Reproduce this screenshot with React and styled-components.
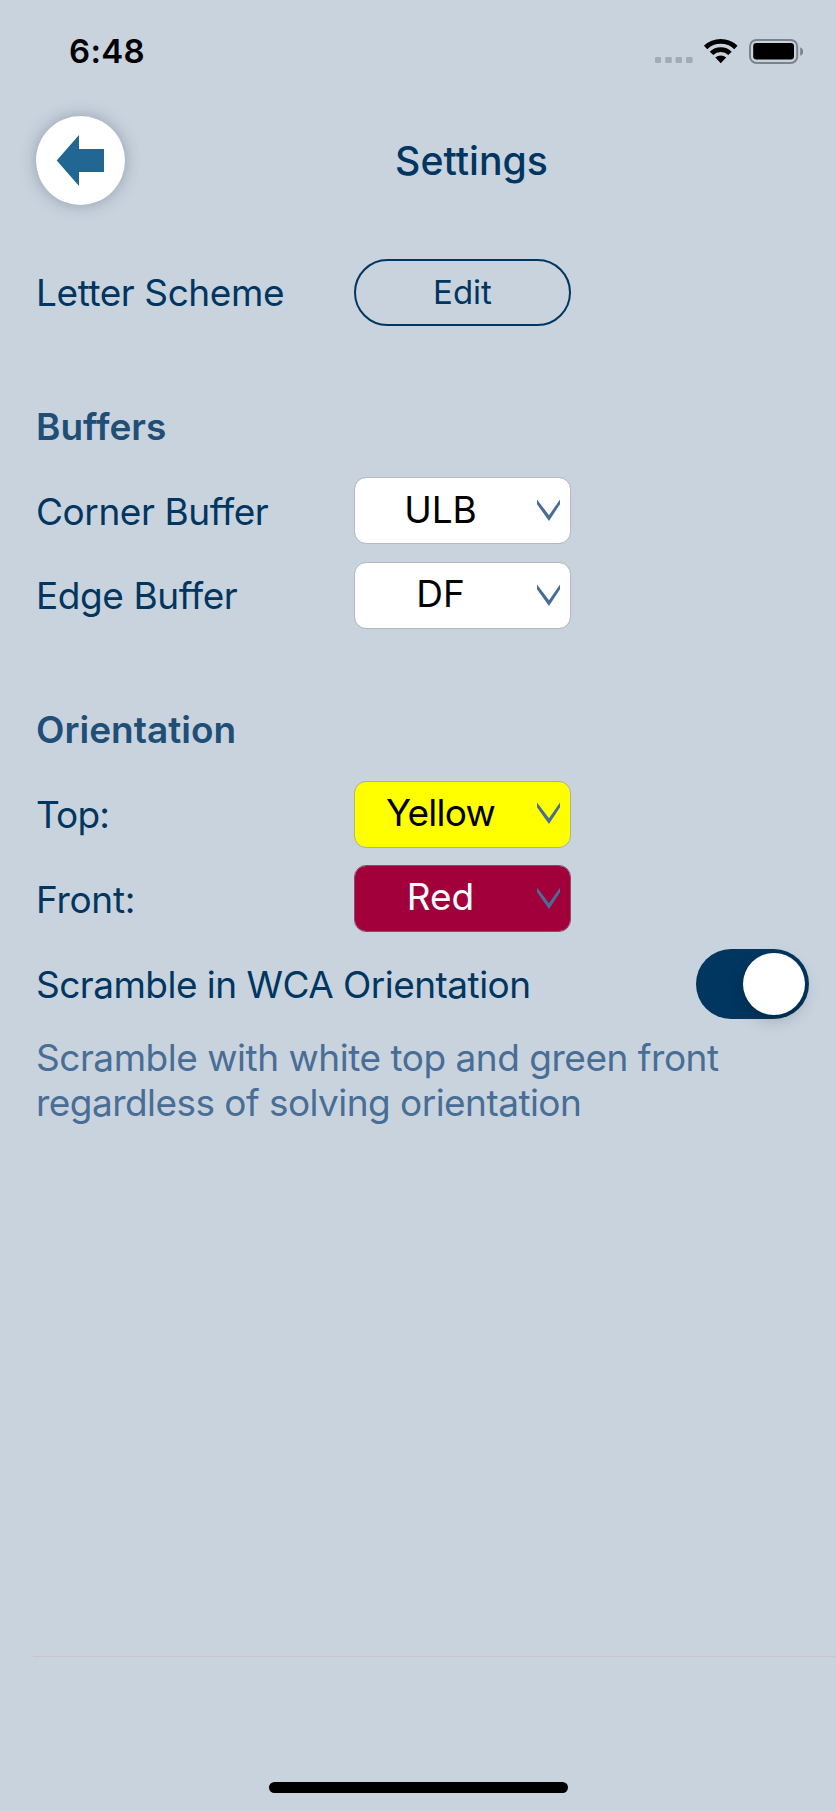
import React, { useState } from "react";
import styled, { createGlobalStyle } from "styled-components";

const GlobalStyle = createGlobalStyle`
  *, *::before, *::after { box-sizing: border-box; }
  html, body { margin: 0; padding: 0; background: #c9d3de; }
  button { font: inherit; color: inherit; padding: 0; margin: 0; }
`;

const Screen = styled.div`
  width: 836px;
  height: 1811px;
  display: flex;
  flex-direction: column;
  overflow: hidden;
  background: #c9d3de;
  color: #003660;
  font-family: Inter, "Liberation Sans", sans-serif;
  font-size: 37px;
  line-height: 44.6px;
`;

const StatusBar = styled.div`
  flex: none;
  height: 116px;
  padding: 31px 33px 0 69px;
  display: flex;
  align-items: flex-start;
  justify-content: space-between;
  color: #000;
`;

const Time = styled.span`
  font-size: 33px;
  line-height: 40px;
  font-weight: 600;
  letter-spacing: 0.3px;
`;

const StatusIcons = styled.svg`
  display: block;
  width: 148px;
  height: 40px;
`;

const Header = styled.header`
  flex: none;
  height: 89px;
  padding: 0 36px;
  display: grid;
  grid-template-columns: 89px 1fr;
  align-items: center;
`;

const BackButton = styled.button`
  width: 89px;
  height: 89px;
  border: 0;
  border-radius: 50%;
  background: #fff;
  box-shadow: 0 0 16px rgba(40, 55, 80, 0.34);
  display: block;

  svg { display: block; width: 89px; height: 89px; }
`;

const Title = styled.h1`
  margin: 0;
  padding-top: 2px;
  padding-left: 18px;
  text-align: center;
  font-size: 39.2px;
  font-weight: 500;
`;

const Content = styled.main`
  flex: 1;
  padding: 54px 27px 0 36px;
  display: flex;
  flex-direction: column;
  gap: 66.9px;
`;

const Section = styled.section`
  display: flex;
  flex-direction: column;
  gap: 17.8px;
`;

const SectionTitle = styled.h2`
  margin: 0;
  height: 66.9px;
  padding-top: 2px;
  display: flex;
  align-items: center;
  font-size: 37px;
  line-height: 44.6px;
  font-weight: 600;
  color: #1f4e76;
`;

const Row = styled.div`
  height: 66.9px;
  display: grid;
  grid-template-columns: ${(p) => (p.$wide ? "1fr 113px" : "318px 217px")};
  align-items: center;
`;

const Label = styled.span`
  padding-top: ${(p) => p.$drop ?? 2}px;
  white-space: nowrap;
  letter-spacing: ${(p) => p.$tracking || "-0.43px"};
`;

const EditButton = styled.button`
  height: 67px;
  padding-bottom: 2px;
  border: 2px solid #003660;
  border-radius: 34px;
  background: transparent;
  font-size: 33px;
  line-height: 40px;
`;

const Select = styled.button`
  height: 67px;
  padding: 0 10px 2px 0;
  border: 1px solid ${(p) => p.$edge};
  border-radius: 12px;
  background: ${(p) => p.$fill};
  background-clip: padding-box;
  color: ${(p) => p.$ink};
  display: grid;
  grid-template-columns: 1fr 23px;
  align-items: center;
`;

const SelectValue = styled.span`
  padding-left: 8px;
  padding-right: 19px;
  padding-bottom: ${(p) => p.$lift || 0}px;
  text-align: center;
  font-size: 37px;
  line-height: 44px;
  letter-spacing: ${(p) => p.$tracking || "0"};
`;

const Toggle = styled.button`
  width: 113px;
  height: 70px;
  margin-top: -1px;
  padding: 4px;
  border: 0;
  border-radius: 35px;
  background: #003660;
  display: flex;
  align-items: center;
  justify-content: ${(p) => (p.$on ? "flex-end" : "flex-start")};
`;

const Knob = styled.span`
  width: 62px;
  height: 62px;
  border-radius: 50%;
  background: #fff;
  box-shadow: 0 6px 16px rgba(0, 0, 0, 0.17), 0 3px 3px rgba(0, 0, 0, 0.06);
`;

const Hint = styled.p`
  margin: 0;
  color: #486e96;
  line-height: 45px;
  white-space: nowrap;
`;

const HintLine = styled.span`
  display: block;
  letter-spacing: ${(p) => p.$tracking || "0"};
`;

const Footer = styled.footer`
  flex: none;
  height: 155px;
  margin-left: 33px;
  padding: 0 0 18px 0;
  border-top: 1px solid #c5c6cc;
  display: flex;
  align-items: flex-end;
`;

const HomeIndicator = styled.div`
  width: 299px;
  height: 11px;
  margin-left: 236px;
  border-radius: 5.5px;
  background: #000;
`;

function Indicators() {
  return (
    <StatusIcons viewBox="655 31 148 40" aria-hidden="true">
      <g fill="#a1abb5">
        <rect x="655" y="57" width="6" height="6" rx="1.2" />
        <rect x="665.2" y="57" width="6.6" height="6" rx="1.2" />
        <rect x="675.5" y="57" width="6.5" height="6" rx="1.2" />
        <rect x="686" y="57" width="6.6" height="6" rx="1.2" />
      </g>
      <g fill="none" stroke="#000" strokeWidth="4.8">
        <path d="M705.6 47.4A22 22 0 0 1 735.9 47.4" />
        <path d="M711.5 53.4A13.2 13.2 0 0 1 730 53.4" />
      </g>
      <path d="M715.3 57.6A7.8 7.8 0 0 1 726.2 57.6L720.75 63.2Z" />
      <rect x="750" y="39.9" width="47.2" height="23" rx="6.5" fill="none" stroke="#7b838b" strokeWidth="2" />
      <rect x="753.2" y="43" width="40.8" height="16.6" rx="3.3" />
      <path d="M800.2 47.2A4.6 4.6 0 0 1 800.2 55.8Z" fill="#7b838b" />
    </StatusIcons>
  );
}

function Chevron() {
  return (
    <svg width="23" height="24" viewBox="0 0 23 24" aria-hidden="true">
      <path d="M0 1.5L12 17.2L23 1.5V6.2L12 23L0 6.2Z" fill="#486e96" />
    </svg>
  );
}

function SelectRow({
  label,
  value,
  fill = "#fff",
  edge = "#b2bac5",
  ink = "#000",
  lift,
  tracking,
  valueTracking,
}) {
  return (
    <Row>
      <Label $tracking={tracking}>{label}</Label>
      <Select $fill={fill} $edge={edge} $ink={ink}>
        <SelectValue $tracking={valueTracking} $lift={lift}>{value}</SelectValue>
        <Chevron />
      </Select>
    </Row>
  );
}

export default function App() {
  const [wca, setWca] = useState(true);

  return (
    <>
      <GlobalStyle />
      <Screen>
        <StatusBar>
          <Time>6:48</Time>
          <Indicators />
        </StatusBar>
        <Header>
          <BackButton aria-label="Back">
            <svg viewBox="0 0 89 89">
              <path d="M20.7 44.5L43 19V33H68V56H43V70Z" fill="#226794" />
            </svg>
          </BackButton>
          <Title>Settings</Title>
        </Header>
        <Content>
          <Row>
            <Label>Letter Scheme</Label>
            <EditButton>Edit</EditButton>
          </Row>
          <Section>
            <SectionTitle>Buffers</SectionTitle>
            <SelectRow label="Corner Buffer" value="ULB" />
            <SelectRow label="Edge Buffer" value="DF" lift={1} />
          </Section>
          <Section>
            <SectionTitle>Orientation</SectionTitle>
            <SelectRow
              label="Top:"
              value="Yellow"
              fill="#ffff00"
              edge="#b0b580"
              tracking="-0.9px"
              valueTracking="-0.8px"
            />
            <SelectRow
              label="Front:"
              value="Red"
              fill="#a2003b"
              edge="#8a4a68"
              ink="#fff"
              lift={1}
              tracking="-0.3px"
            />
            <Row $wide>
              <Label $tracking="-0.53px" $drop={1}>Scramble in WCA Orientation</Label>
              <Toggle
                $on={wca}
                role="switch"
                aria-checked={wca}
                aria-label="Scramble in WCA Orientation"
                onClick={() => setWca(!wca)}
              >
                <Knob />
              </Toggle>
            </Row>
            <Hint>
              <HintLine $tracking="-0.48px">Scramble with white top and green front</HintLine>
              <HintLine $tracking="-0.55px">regardless of solving orientation</HintLine>
            </Hint>
          </Section>
        </Content>
        <Footer>
          <HomeIndicator />
        </Footer>
      </Screen>
    </>
  );
}
